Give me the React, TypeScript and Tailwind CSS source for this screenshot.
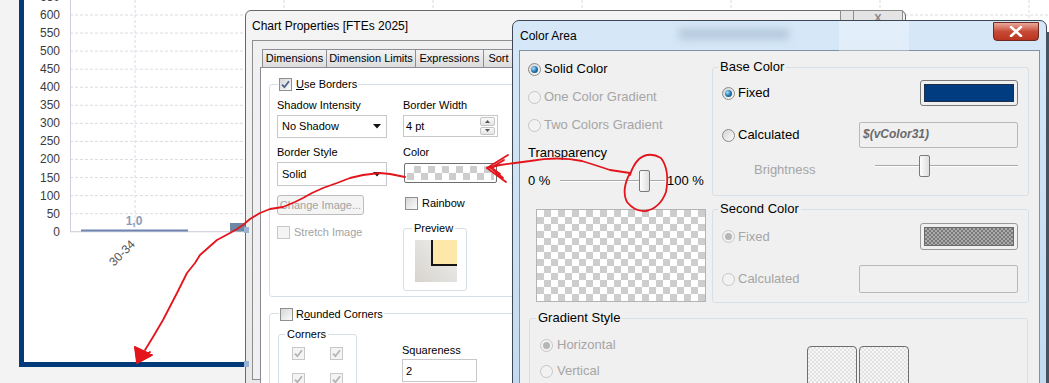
import React from "react";

function Check({ checked, disabled }: { checked?: boolean; disabled?: boolean }) {
  return (
    <span
      className={`flex h-[13px] w-[13px] shrink-0 items-center justify-center border ${
        disabled ? "border-[#c8c8c8] bg-[#f4f4f4]" : "border-[#8e8f8f] bg-gradient-to-br from-[#d6d6d6] to-[#fcfcfc]"
      }`}
    >
      {checked && (
        <svg width="9" height="9" viewBox="0 0 9 9">
          <path d="M1 4.6 L3.4 7.2 L8 1.2" fill="none" stroke={disabled ? "#b4b4b4" : "#4b5f8e"} strokeWidth="1.8" />
        </svg>
      )}
    </span>
  );
}

function Radio({ checked, disabled }: { checked?: boolean; disabled?: boolean }) {
  return (
    <span
      className={`flex h-[13px] w-[13px] shrink-0 items-center justify-center rounded-full border ${
        disabled ? "border-[#c6c6c6] bg-[#f2f2f2]" : "border-[#8a8b8b] bg-gradient-to-br from-[#d4d4d4] to-[#fbfbfb]"
      }`}
    >
      {checked && (
        <span
          className={`h-[7px] w-[7px] rounded-full ${
            disabled ? "bg-[#b6b6b6]" : "bg-[radial-gradient(circle_at_35%_35%,#a6e0ff,#1d70a8_55%,#0b3f6b)]"
          }`}
        />
      )}
    </span>
  );
}

function DropArrow() {
  return (
    <svg width="8" height="5" viewBox="0 0 8 5">
      <path d="M0 0 L8 0 L4 4.5 Z" fill="#111" />
    </svg>
  );
}

function Slider({ width, thumb }: { width: number; thumb: number }) {
  return (
    <div className="relative h-[22px] shrink-0" style={{ width }}>
      <div className="absolute left-0 right-0 top-[10px] h-[2px] border-t border-[#a8a8a8] border-b border-b-white" />
      <div
        className="absolute top-0 h-[22px] w-[11px] rounded-[2px] border border-[#7a7a7a] bg-gradient-to-r from-[#fdfdfd] to-[#dedede]"
        style={{ left: thumb }}
      />
    </div>
  );
}

function Chart() {
  const vals = [650, 600, 550, 500, 450, 400, 350, 300, 250, 200, 150, 100, 50, 0];
  const yOf = (v: number) => 15 + 18.06 * (12 - v / 50);
  const vx = [135, 284, 433, 582, 731, 880, 1029];
  return (
    <svg width={1025} height={362} viewBox="24 0 1025 362" className="block">
      {vals.map((v) => (
        <line
          key={v}
          x1={70}
          x2={1049}
          y1={yOf(v)}
          y2={yOf(v)}
          stroke={v === 0 ? "#c9c9d6" : "#dcdce4"}
          strokeDasharray={v === 0 ? undefined : "3 2"}
        />
      ))}
      {vx.map((x) => (
        <line key={x} x1={x} x2={x} y1={0} y2={231.7} stroke="#dcdce4" strokeDasharray="3 2" />
      ))}
      <line x1={70.5} x2={70.5} y1={0} y2={232} stroke="#cfcfdc" />
      {vals.map((v) => (
        <text
          key={"t" + v}
          x={60}
          y={yOf(v) + 4}
          textAnchor="end"
          fontSize="12"
          fill="#3c3c3c"
          fontFamily="Liberation Sans, Arial, sans-serif"
        >
          {v}
        </text>
      ))}
      <rect x={81} y={229.5} width={107} height={2} fill="#6f86b1" />
      <rect x={230} y={223} width={18} height={8.5} fill="#6d88a4" />
      <text
        x={134}
        y={225}
        textAnchor="middle"
        fontSize="12"
        fontWeight="bold"
        fill="#8b9cb6"
        fontFamily="Liberation Sans, Arial, sans-serif"
      >
        1,0
      </text>
      <text
        x={122}
        y={257}
        textAnchor="middle"
        fontSize="12"
        fill="#555"
        transform="rotate(-45 122 253)"
        fontFamily="Liberation Sans, Arial, sans-serif"
      >
        30-34
      </text>
    </svg>
  );
}

const checkerBig =
  "bg-[conic-gradient(#cdcdcd_25%,#ffffff_0_50%,#cdcdcd_0_75%,#ffffff_0)] bg-[length:14px_14px]";

function ChartProperties() {
  return (
    <div className="absolute left-[245px] top-[10px] h-[380px] w-[661px] rounded-t-[6px] border border-[#686868] bg-gradient-to-b from-[#f4f4f4] to-[#e8e8e8] font-['Liberation_Sans',sans-serif] text-[11px] text-black">
      <div className="flex h-[29px] items-center pl-[6px] text-[12px]">Chart Properties [FTEs 2025]</div>
      <div className="absolute right-[2px] top-[-1px] flex h-[16px] w-[63px] rounded-b-[3px] border border-[#8c8c8c] bg-[#e4e4e4]">
        <div className="w-[13px] border-r border-[#8c8c8c]" />
        <div className="flex flex-1 items-start justify-center pt-[1px] text-[11px] font-bold leading-[12px] text-[#888]">X</div>
      </div>
      <div className="ml-[6px] mr-[6px] h-[340px] border border-[#8e8e8e] bg-[#f0f0f0] pl-[7px] pt-[8px]">
        <div className="ml-[2px] flex h-[18px]">
          {[
            ["Dimensions", "w-[65px]"],
            ["Dimension Limits", "w-[90px]"],
            ["Expressions", "w-[69px]"],
            ["Sort", "w-[31px]"],
            ["Style", "w-[50px]"],
          ].map(([t, w]) => (
            <div
              key={t}
              className={`${w} -mr-px flex items-center justify-center border border-b-0 border-[#8c8e94] bg-gradient-to-b from-[#f3f3f3] to-[#dcdcdc] text-[11px]`}
            >
              {t}
            </div>
          ))}
        </div>
        <div className="h-[330px] border border-[#898c95] bg-white pl-[8px] pr-[10px] pt-[16px]">
          {/* Use Borders group */}
          <div className="relative h-[213px] rounded-[3px] border border-[#d5dfe5] pl-[7px] pt-[13px]">
            <div className="absolute left-[8px] top-[-8px] flex items-center gap-[4px] bg-white px-[1px]">
              <Check checked />
              <span className="leading-[14px]">
                <span className="underline">U</span>se Borders
              </span>
            </div>
            <div className="flex">
              <div className="flex w-[126px] flex-col">
                <div className="h-[14px] leading-[14px]">Shadow Intensity</div>
                <div className="mt-[3px] flex h-[23px] w-[110px] items-center justify-between border border-[#c6c8cc] pl-[4px] pr-[5px]">
                  <span>No Shadow</span>
                  <DropArrow />
                </div>
                <div className="mt-[7px] h-[14px] leading-[14px]">Border Style</div>
                <div className="mt-[3px] flex h-[24px] w-[110px] items-center justify-between border border-[#c6c8cc] pl-[4px] pr-[5px]">
                  <span>Solid</span>
                  <DropArrow />
                </div>
                <div className="mt-[9px] flex h-[20px] w-[87px] items-center justify-center rounded-[3px] border border-[#bcbcbc] bg-[#f4f4f4] text-[#a3a3a3]">
                  Change Image...
                </div>
                <div className="mt-[9px] flex items-center gap-[4px] text-[#a3a3a3]">
                  <Check disabled />
                  <span>Stretch Image</span>
                </div>
              </div>
              <div className="flex flex-col">
                <div className="h-[14px] leading-[14px]">Border Width</div>
                <div className="mt-[3px] flex h-[22px] w-[95px] justify-between border border-[#c6c8cc] pl-[2px] pr-[2px]">
                  <span className="pt-[2px]">4 pt</span>
                  <div className="mt-[1px] flex h-[18px] w-[15px] flex-col gap-px">
                    <div className="flex flex-1 items-center justify-center rounded-[2px] border border-[#c4c4c4] bg-gradient-to-b from-[#fafafa] to-[#e4e4e4]">
                      <svg width="5" height="3" viewBox="0 0 5 3"><path d="M0 3 L2.5 0 L5 3 Z" fill="#555" /></svg>
                    </div>
                    <div className="flex flex-1 items-center justify-center rounded-[2px] border border-[#c4c4c4] bg-gradient-to-b from-[#fafafa] to-[#e4e4e4]">
                      <svg width="5" height="3" viewBox="0 0 5 3"><path d="M0 0 L2.5 3 L5 0 Z" fill="#555" /></svg>
                    </div>
                  </div>
                </div>
                <div className="mt-[8px] h-[14px] leading-[14px]">Color</div>
                <div className="ml-[1px] mt-[4px] h-[20px] w-[93px] rounded-[2px] border border-[#6e6e6e] p-[2px]">
                  <div className={`h-full w-full ${checkerBig}`} />
                </div>
                <div className="ml-[2px] mt-[12px] flex items-center gap-[4px]">
                  <Check />
                  <span>Rainbow</span>
                </div>
                <div className="relative mt-[16px] h-[63px] w-[64px] rounded-[3px] border border-[#d5dfe5] pl-[11px] pt-[11px]">
                  <span className="absolute left-[8px] top-[-8px] bg-white px-[2px] leading-[14px]">Preview</span>
                  <div className="flex h-[42px] w-[42px] justify-end bg-gradient-to-tr from-[#d6d3cf] to-[#f2f1ee]">
                    <div className="h-[26px] w-[26px] border-b-2 border-l-2 border-[#151515] bg-[#fde8a9]" />
                  </div>
                </div>
              </div>
            </div>
          </div>
          {/* Rounded Corners group */}
          <div className="relative mt-[16px] h-[100px] rounded-[3px] border border-[#d5dfe5] pl-[8px] pt-[20px]">
            <div className="absolute left-[9px] top-[-7px] flex items-center gap-[3px] bg-white px-[1px]">
              <Check />
              <span className="leading-[14px]">
                R<span className="underline">o</span>unded Corners
              </span>
            </div>
            <div className="flex">
              <div className="relative h-[70px] w-[79px] rounded-[3px] border border-[#d5dfe5] pl-[13px] pt-[12px]">
                <span className="absolute left-[6px] top-[-8px] bg-white px-[2px] leading-[14px]">Corners</span>
                <div className="grid w-[50px] grid-cols-2 gap-x-[25px] gap-y-[13px]">
                  <Check checked disabled />
                  <Check checked disabled />
                  <Check checked disabled />
                  <Check checked disabled />
                </div>
              </div>
              <div className="ml-[45px] flex flex-col pt-[9px]">
                <div className="h-[14px] leading-[14px]">Squareness</div>
                <div className="mt-[2px] h-[23px] w-[75px] border border-[#c6c8cc] pl-[3px] pt-[3px]">2</div>
              </div>
            </div>
          </div>
        </div>
      </div>
    </div>
  );
}

function ColorArea() {
  const dis = "text-[#a5a5a5]";
  return (
    <div className="absolute left-[512px] top-[20px] h-[375px] w-[535px] overflow-hidden rounded-t-[7px] border border-[#3c4753] bg-gradient-to-b from-[#d6e8f8] to-[#c2daf0] font-['Liberation_Sans',sans-serif] text-[13px] text-black">
      <div className="pointer-events-none absolute left-[166px] top-[8px] h-[10px] w-[110px] bg-[#7b95ae] opacity-40 blur-[4px]" />
      <div className="pointer-events-none absolute left-[326px] top-0 h-[30px] w-[70px] bg-[#ffffff] opacity-30" />
      <div className="relative flex h-[29px] items-center pl-[7px] text-[12px]">Color Area</div>
      <div className="absolute right-[7px] top-[1px] flex h-[19px] w-[46px] items-center justify-center rounded-b-[4px] border border-[#6b2a22] bg-gradient-to-b from-[#e9a89c] via-[#c74a36] to-[#b93520]">
        <svg width="14" height="11" viewBox="0 0 14 11">
          <path d="M2 1 L12 10 M12 1 L2 10" stroke="#fff" strokeWidth="2.6" strokeLinecap="round" />
        </svg>
      </div>
      <div className="ml-[6px] h-[340px] w-[521px] border border-[#8092a4] bg-[#f0f0f0]">
        <div className="flex">
          {/* left column */}
          <div className="flex w-[192px] flex-col pl-[8px] pt-[11px]">
            <div className="flex h-[14px] items-center gap-[3px]">
              <Radio checked />
              <span>Solid Color</span>
            </div>
            <div className={`mt-[14px] flex h-[14px] items-center gap-[3px] ${dis}`}>
              <Radio disabled />
              <span>One Color Gradient</span>
            </div>
            <div className={`mt-[14px] flex h-[14px] items-center gap-[3px] ${dis}`}>
              <Radio disabled />
              <span>Two Colors Gradient</span>
            </div>
            <div className="mt-[14px] h-[14px] leading-[14px]">Transparency</div>
            <div className="mt-[10px] flex h-[22px] items-center">
              <span className="w-[32px] shrink-0">0 %</span>
              <Slider width={105} thumb={79} />
              <span className="ml-[2px] shrink-0">100 %</span>
            </div>
            <div className={`ml-[8px] mt-[17px] h-[93px] w-[170px] border border-[#b4b4b4] ${checkerBig}`} />
          </div>
          {/* right column */}
          <div className="flex w-[317px] flex-col pt-[16px]">
            <div className="relative h-[129px] rounded-[3px] border border-[#d5dfe5] pl-[9px] pr-[10px] pt-[12px]">
              <span className="absolute left-[5px] top-[-8px] bg-[#f0f0f0] px-[2px] leading-[14px]">Base Color</span>
              <div className="flex h-[26px] items-center">
                <Radio checked />
                <span className="ml-[3px]">Fixed</span>
                <div className="ml-auto h-[26px] w-[98px] rounded-[3px] border border-[#7a7a7a] p-[3px]">
                  <div className="h-full w-full border border-[#1d2f48] bg-[#023c80]" />
                </div>
              </div>
              <div className="mt-[16px] flex h-[26px] items-center">
                <Radio />
                <span className="ml-[3px]">Calculated</span>
                <div className="ml-auto h-[26px] w-[159px] rounded-[2px] border border-[#b8b8b8] pl-[3px] pt-[2px] text-[12px] font-bold italic text-[#6a6a6a]">
                  $(vColor31)
                </div>
              </div>
              <div className="mt-[9px] flex h-[20px] items-center">
                <span className={`ml-[32px] mt-[6px] ${dis}`}>Brightness</span>
                <div className="ml-auto -mt-[2px]">
                  <Slider width={143} thumb={44} />
                </div>
              </div>
            </div>
            <div className="relative mt-[13px] h-[94px] rounded-[3px] border border-[#d5dfe5] pl-[9px] pr-[10px] pt-[13px]">
              <span className="absolute left-[5px] top-[-8px] bg-[#f0f0f0] px-[2px] leading-[14px]">Second Color</span>
              <div className={`flex h-[27px] items-center ${dis}`}>
                <Radio checked disabled />
                <span className="ml-[3px]">Fixed</span>
                <div className="ml-auto h-[27px] w-[98px] rounded-[3px] border border-[#9a9a9a] p-[3px]">
                  <div className="h-full w-full border border-[#6a6a6a] bg-[conic-gradient(#7a7a7a_25%,#ababab_0_50%,#7a7a7a_0_75%,#ababab_0)] bg-[length:4px_4px]" />
                </div>
              </div>
              <div className={`mt-[15px] flex h-[28px] items-center ${dis}`}>
                <Radio disabled />
                <span className="ml-[3px]">Calculated</span>
                <div className="ml-auto h-[28px] w-[159px] rounded-[2px] border border-[#b8b8b8]" />
              </div>
            </div>
          </div>
        </div>
        {/* Gradient style */}
        <div className="relative ml-[9px] mt-[15px] h-[80px] w-[499px] rounded-[3px] border border-[#d5dfe5]">
          <span className="absolute left-[6px] top-[-8px] bg-[#f0f0f0] px-[2px] leading-[14px]">Gradient Style</span>
          <div className="flex">
            <div className={`flex w-[277px] flex-col pl-[10px] pt-[19px] ${dis}`}>
              <div className="flex h-[14px] items-center gap-[4px]">
                <Radio checked disabled />
                <span>Horizontal</span>
              </div>
              <div className="mt-[12px] flex h-[14px] items-center gap-[4px]">
                <Radio disabled />
                <span>Vertical</span>
              </div>
            </div>
            <div className="mt-[27px] flex gap-[2px]">
              <div className="h-[50px] w-[50px] rounded-[4px] border border-[#6e6e6e] bg-[conic-gradient(#e2e2e2_25%,#f6f6f6_0_50%,#e2e2e2_0_75%,#f6f6f6_0)] bg-[length:4px_4px]" />
              <div className="h-[50px] w-[50px] rounded-[4px] border border-[#6e6e6e] bg-[conic-gradient(#e2e2e2_25%,#f6f6f6_0_50%,#e2e2e2_0_75%,#f6f6f6_0)] bg-[length:4px_4px]" />
            </div>
          </div>
        </div>
      </div>
    </div>
  );
}

function Annotations() {
  const red = "#e3141c";
  return (
    <svg className="pointer-events-none absolute left-0 top-0" width={1049} height={383} viewBox="0 0 1049 383">
      <rect x={1046} y={32} width={3} height={351} fill="#46535f" />
      <rect x={244} y={227} width={5} height={6} fill="#9cb3cf" />
      <rect x={244} y={361} width={5} height={6} fill="#9cb3cf" />
      <g fill="none" stroke={red} strokeWidth={1.8} strokeLinejoin="round" strokeLinecap="round">
        <path d="M487 168 L500 165 L515 163 L530 161 Q558 156 582 161 Q598 166 610 170 L630 173" />
        <path d="M630 173 Q621 190 627 202 Q635 212 646 211 Q660 208 666 192 Q670 170 661 158 Q649 151 639 159 Q633 165 630 175" />
        <path d="M508 155 L487 168 L506 182 M504 160 L491 168 L503 178 M499 163 L492 168 L500 174" />
        <path d="M405 177 L390 174 L380 173 L363 175 L350 178 L337 183 L323 188 L312 193 L303 198 L295 202 L283 207 L270 209 L260 213 L250 219 L243 225 L237 229 L230 233 L217 240 L200 255 L195 263 L187 273 L177 293 L163 320 L153 337 L145 350" />
        <path d="M137 363 L135 347 L152 355 Z M139 358 L140 350 L147 355 M138 362 L150 352" />
      </g>
      <path d="M137 364 L134 346 L153 355 Z" fill={red} />
    </svg>
  );
}

export default function App() {
  return (
    <div className="relative h-[383px] w-[1049px] overflow-hidden bg-[#f3f3f3]">
      <div className="ml-[19px] h-[367px] w-[1030px] border-b-[5px] border-l-[5px] border-[#033a7a] bg-white">
        <Chart />
      </div>
      <ChartProperties />
      <ColorArea />
      <Annotations />
    </div>
  );
}
